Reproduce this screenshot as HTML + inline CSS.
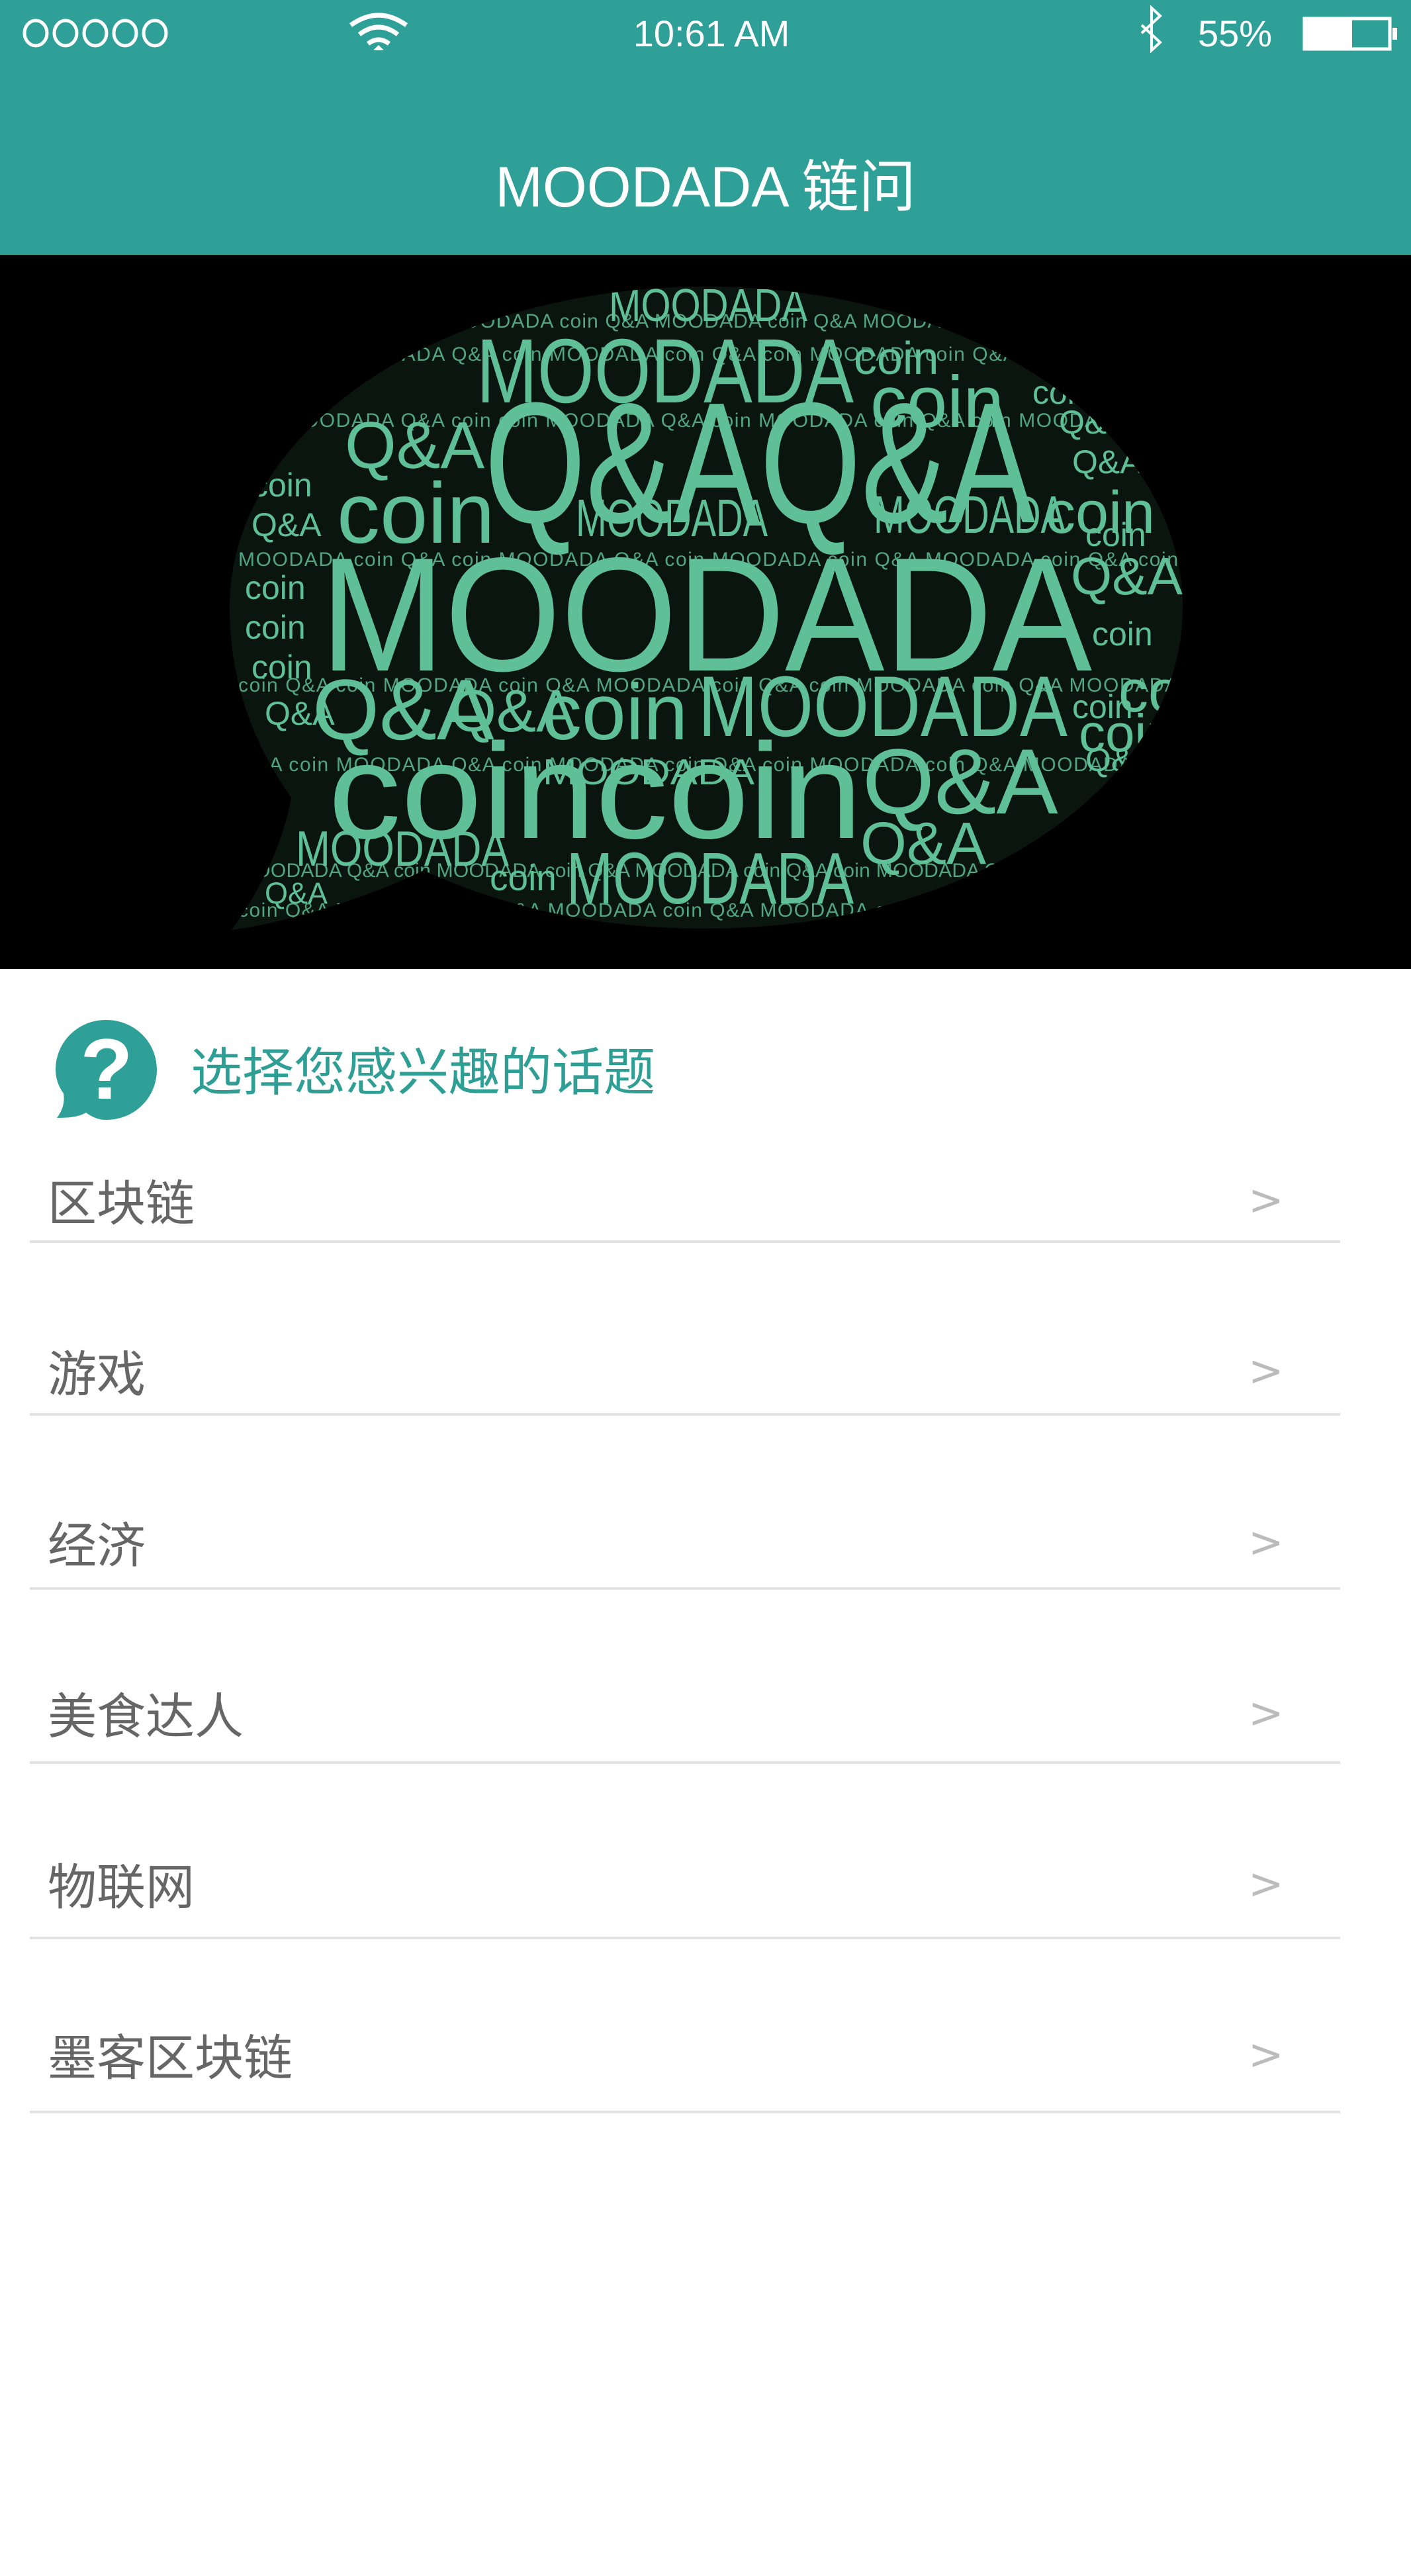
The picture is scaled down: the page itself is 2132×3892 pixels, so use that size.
<!DOCTYPE html>
<html><head><meta charset="utf-8"><style>
html,body{margin:0;padding:0;}
body{width:2132px;height:3892px;position:relative;background:#fff;overflow:hidden;font-family:"Liberation Sans","Noto Sans CJK SC",sans-serif;}
.nav{position:absolute;left:0;top:0;width:2132px;height:385px;background:#2fa098;}
.abs{position:absolute;white-space:nowrap;}
.row{position:absolute;left:72px;font-size:74px;color:#666;line-height:1;}
.arr{position:absolute;left:1886px;font-size:64px;color:#bbb;line-height:1;font-family:"DejaVu Sans",sans-serif;}
.div{position:absolute;left:45px;width:1980px;height:4px;background:#e2e2e2;}
</style></head><body>
<div class="nav"></div>
<!-- status bar -->
<svg class="abs" style="left:0;top:0" width="2132" height="110">
 <g fill="none" stroke="#fff" stroke-width="5">
  <ellipse cx="54" cy="50" rx="17" ry="19"/><ellipse cx="99" cy="50" rx="17" ry="19"/><ellipse cx="144" cy="50" rx="17" ry="19"/><ellipse cx="189" cy="50" rx="17" ry="19"/><ellipse cx="234" cy="50" rx="17" ry="19"/>
  <path d="M530 38 Q572 8 614 38" stroke-width="7"/><path d="M543 52 Q572 30 601 52" stroke-width="7"/><path d="M556 66 Q572 54 588 66" stroke-width="7"/>
  <path d="M1725 38 L1753 64 L1740 76 L1740 12 L1753 24 L1725 50" stroke-width="4"/>
  <rect x="1971" y="28" width="129" height="46" stroke-width="5"/>
 </g>
 <path d="M564 76 L572 68 L580 76 Z" fill="#fff"/>
 <rect x="1971" y="28" width="72" height="46" fill="#fff"/>
 <rect x="2104" y="42" width="7" height="18" fill="#fff"/>
 <text x="1075" y="70" font-size="56" fill="#fff" text-anchor="middle" font-family="Liberation Sans">10:61 AM</text>
 <text x="1810" y="70" font-size="56" fill="#fff" font-family="Liberation Sans">55%</text>
</svg>
<div class="abs" style="left:0;width:2132px;top:240px;text-align:center;font-size:86px;color:#fff;line-height:1;">MOODADA 链问</div>
<!-- banner -->
<svg class="abs" style="left:0;top:385px" width="2132" height="1079" viewBox="0 0 2132 1079">
 <rect width="2132" height="1079" fill="#000"/>
 <defs><clipPath id="cp"><path d="M1067 48 C1470 48 1787 265 1787 533 C1787 800 1470 1018 1067 1018 C900 1018 760 985 640 930 C560 970 430 1010 350 1020 C400 950 430 880 440 820 C380 735 347 640 347 533 C347 265 664 48 1067 48 Z"/></clipPath></defs>
 <path d="M1067 48 C1470 48 1787 265 1787 533 C1787 800 1470 1018 1067 1018 C900 1018 760 985 640 930 C560 970 430 1010 350 1020 C400 950 430 880 440 820 C380 735 347 640 347 533 C347 265 664 48 1067 48 Z" fill="#0b1510"/>
 <g clip-path="url(#cp)" fill="#5fbf96" font-family="Liberation Sans">
  <g font-size="30" opacity="0.85">
   <text x="360" y="110" textLength="1420">MOODADA coin Q&amp;A MOODADA coin Q&amp;A MOODADA coin Q&amp;A MOODADA coin Q&amp;A MOODADA</text>
   <text x="360" y="160" textLength="1420">Q&amp;A coin MOODADA Q&amp;A coin MOODADA coin Q&amp;A coin MOODADA coin Q&amp;A MOODADA coin</text>
   <text x="360" y="260" textLength="1420">coin MOODADA Q&amp;A coin coin MOODADA Q&amp;A coin MOODADA coin Q&amp;A coin MOODADA Q&amp;A</text>
   <text x="360" y="470" textLength="1420">MOODADA coin Q&amp;A coin MOODADA Q&amp;A coin MOODADA coin Q&amp;A MOODADA coin Q&amp;A coin</text>
   <text x="360" y="660" textLength="1420">coin Q&amp;A coin MOODADA coin Q&amp;A MOODADA coin Q&amp;A coin MOODADA coin Q&amp;A MOODADA</text>
   <text x="360" y="780" textLength="1420">Q&amp;A coin MOODADA Q&amp;A coin MOODADA coin Q&amp;A coin MOODADA coin Q&amp;A MOODADA coin</text>
   <text x="360" y="940" textLength="1420">MOODADA Q&amp;A coin MOODADA coin Q&amp;A MOODADA coin Q&amp;A coin MOODADA Q&amp;A coin MOODADA</text>
   <text x="360" y="1000" textLength="1420">coin Q&amp;A MOODADA coin Q&amp;A MOODADA coin Q&amp;A MOODADA coin Q&amp;A MOODADA coin Q&amp;A</text>
  </g>
  <g font-size="50">
   <text x="380" y="365">coin</text><text x="380" y="425">Q&amp;A</text><text x="370" y="520">coin</text><text x="370" y="580">coin</text><text x="380" y="640">coin</text><text x="400" y="710">Q&amp;A</text>
   <text x="1620" y="330">Q&amp;A</text><text x="1640" y="440">coin</text><text x="1650" y="590">coin</text><text x="1620" y="700">coin</text><text x="1640" y="780">Q&amp;A</text>
   <text x="1560" y="225">coin</text><text x="1600" y="270">Q&amp;A</text>
  </g>
  <text x="720" y="223" font-size="138" textLength="570" lengthAdjust="spacingAndGlyphs">MOODADA</text>
  <text x="920" y="100" font-size="70" textLength="300" lengthAdjust="spacingAndGlyphs">MOODADA</text>
  <text x="1290" y="180" font-size="70">coin</text>
  <text x="1315" y="260" font-size="110">coin</text>
  <text x="521" y="322" font-size="100">Q&amp;A</text>
  <text x="732" y="404" font-size="260" textLength="832" lengthAdjust="spacingAndGlyphs">Q&amp;AQ&amp;A</text>
  <text x="509" y="435" font-size="130">coin</text>
  <text x="1320" y="420" font-size="80" textLength="290" lengthAdjust="spacingAndGlyphs">MOODADA</text>
  <text x="870" y="425" font-size="80" textLength="290" lengthAdjust="spacingAndGlyphs">MOODADA</text>
  <text x="1580" y="420" font-size="90">coin</text>
  <text x="1618" y="513" font-size="80">Q&amp;A</text>
  <text x="484" y="628" font-size="245" textLength="1166" lengthAdjust="spacingAndGlyphs">MOODADA</text>
  <text x="1690" y="690" font-size="90">coin</text>
  <text x="472" y="732" font-size="130">Q&amp;A</text>
  <text x="680" y="720" font-size="90">Q&amp;A</text>
  <text x="819" y="732" font-size="120">coin</text>
  <text x="1055" y="727" font-size="130" textLength="558" lengthAdjust="spacingAndGlyphs">MOODADA</text>
  <text x="1630" y="750" font-size="80">coin</text>
  <text x="496" y="881" font-size="205" textLength="807" lengthAdjust="spacingAndGlyphs">coincoin</text>
  <text x="1303" y="844" font-size="140">Q&amp;A</text>
  <text x="1300" y="920" font-size="90">Q&amp;A</text>
  <text x="447" y="923" font-size="75" textLength="322" lengthAdjust="spacingAndGlyphs">MOODADA</text>
  <text x="856" y="980" font-size="110" textLength="434" lengthAdjust="spacingAndGlyphs">MOODADA</text>
  <text x="740" y="960" font-size="55">coin</text>
  <text x="820" y="800" font-size="55" textLength="320" lengthAdjust="spacingAndGlyphs">MOODADA</text>
  <text x="400" y="980" font-size="45">Q&amp;A</text>
 </g>
</svg>
<!-- section header -->
<svg class="abs" style="left:80px;top:1537px" width="160" height="160" viewBox="0 0 160 160">
 <path d="M80 4 C124 4 157 38 157 79 C157 121 124 155 80 155 C68 155 58 150 50 144 C40 150 25 152 6 152 C15 140 18 128 16 115 C8 104 4 92 4 79 C4 38 37 4 80 4 Z" fill="#2fa098"/>
 <text x="81" y="123" font-size="130" font-weight="bold" fill="#fff" text-anchor="middle" font-family="Liberation Sans">?</text>
</svg>
<div class="abs" style="left:288px;top:1581px;font-size:78px;color:#2f9f96;line-height:1;">选择您感兴趣的话题</div>
<!-- rows -->
<div class="row" style="top:1782px">区块链</div><div class="arr" style="top:1782px">&gt;</div><div class="div" style="top:1874px"></div>
<div class="row" style="top:2040px">游戏</div><div class="arr" style="top:2040px">&gt;</div><div class="div" style="top:2135px"></div>
<div class="row" style="top:2299px">经济</div><div class="arr" style="top:2299px">&gt;</div><div class="div" style="top:2398px"></div>
<div class="row" style="top:2557px">美食达人</div><div class="arr" style="top:2557px">&gt;</div><div class="div" style="top:2661px"></div>
<div class="row" style="top:2815px">物联网</div><div class="arr" style="top:2815px">&gt;</div><div class="div" style="top:2926px"></div>
<div class="row" style="top:3073px">墨客区块链</div><div class="arr" style="top:3073px">&gt;</div><div class="div" style="top:3189px"></div>
</body></html>
